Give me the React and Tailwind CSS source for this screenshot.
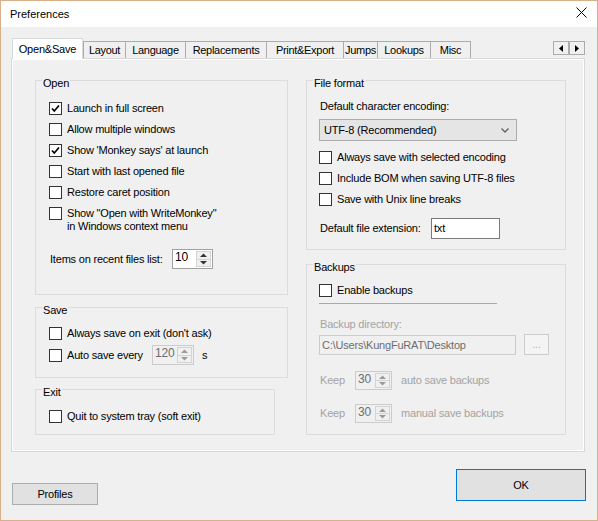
import React from 'react';

const Check = ({ checked }) => (
    <div className="w-[13px] h-[13px] shrink-0 border border-[#333333] bg-white flex items-center justify-center">
        {checked && (
            <svg width="11" height="11" viewBox="0 0 11 11">
                <path d="M2 5.5 L4.3 8 L9 2.5" fill="none" stroke="#000" strokeWidth="1.7" />
            </svg>
        )}
    </div>
);

const CheckRow = ({ label, checked, className = '' }) => (
    <div className={`flex items-center gap-[5px] h-[21px] ${className}`}>
        <Check checked={checked} />
        <span>{label}</span>
    </div>
);

const Tri = ({ dir, color = '#000' }) => {
    const pts = {
        up: '0,4 3.5,0.5 7,4',
        down: '0,0 3.5,3.5 7,0',
        left: '4,0 0,3.5 4,7',
        right: '0,0 4,3.5 0,7',
    }[dir];
    const vertical = dir === 'up' || dir === 'down';
    return (
        <svg width={vertical ? 7 : 4} height={vertical ? 4 : 7} viewBox={vertical ? '0 0 7 4' : '0 0 4 7'}>
            <polygon points={pts} fill={color} />
        </svg>
    );
};

const Spinner = ({ value, w, h = 20, disabled }) => (
    <div
        className={`flex shrink-0 border ${disabled ? 'border-[#cccccc] bg-[#f0f0f0] text-[#6d6d6d]' : 'border-[#a0a0a0] bg-white'}`}
        style={{ width: w, height: h }}
    >
        <div className="flex-1 pl-[2px] leading-[15px] text-[12px]">{value}</div>
        <div className="w-[15px] my-[1px] mr-[1px] flex flex-col border border-[#d4d4d4] bg-[#f0f0f0]">
            <div className="flex-1 flex items-center justify-center border-b border-[#d4d4d4]">
                <Tri dir="up" color={disabled ? '#9a9a9a' : '#333'} />
            </div>
            <div className="flex-1 flex items-center justify-center">
                <Tri dir="down" color={disabled ? '#9a9a9a' : '#333'} />
            </div>
        </div>
    </div>
);

const Group = ({ title, className = '', children }) => (
    <div className={`relative border border-[#dcdcdc] ${className}`}>
        <span className="absolute top-[-5px] left-[6px] px-[1px] leading-[14px] bg-[#f0f0f0]">{title}</span>
        {children}
    </div>
);

const tabs = [
    ['Layout', 42],
    ['Language', 60],
    ['Replacements', 81],
    ['Print&Export', 77],
    ['Jumps', 34],
    ['Lookups', 53],
    ['Misc', 41],
];

export default function App() {
    return (
        <div className="w-[598px] h-[521px] border border-[#d8b08a] bg-[#f0f0f0] flex flex-col text-[11px] tracking-[-0.2px] text-black font-['Liberation_Sans',Arial,sans-serif]">
            {/* title bar */}
            <div className="h-[26px] bg-white flex items-center justify-between pl-[9px] pr-[10px]">
                <span className="tracking-normal">Preferences</span>
                <svg width="11" height="11" viewBox="0 0 11 11" className="mb-[3px]">
                    <path d="M0.5 0.5 L10.5 10.5 M10.5 0.5 L0.5 10.5" stroke="#000" strokeWidth="1" />
                </svg>
            </div>

            <div className="ml-[10px] w-[574px] mt-[11px]">
                {/* tab strip */}
                <div className="flex items-start h-[20px]">
                    <div className="relative z-10 ml-[1px] w-[71px] h-[21px] bg-white border border-b-0 border-[#d9d9d9] flex items-center justify-center">
                        Open&amp;Save
                    </div>
                    {tabs.map(([t, w], i) => (
                        <div
                            key={t}
                            className={`mt-[3px] h-[17px] border-t border-l border-[#acacac] bg-[#f0f0f0] flex items-center justify-center whitespace-nowrap tracking-[-0.3px] ${i === tabs.length - 1 ? 'border-r' : ''}`}
                            style={{ width: w }}
                        >
                            {t}
                        </div>
                    ))}
                    <div className="ml-auto mt-[3px] flex">
                        <div className="w-[16px] h-[14px] border border-[#acacac] bg-[#f0f0f0] flex items-center justify-center">
                            <Tri dir="left" />
                        </div>
                        <div className="w-[16px] h-[14px] border border-[#acacac] bg-[#f0f0f0] flex items-center justify-center">
                            <Tri dir="right" />
                        </div>
                    </div>
                </div>

                {/* tab page */}
                <div className="h-[394px] border border-[#d9d9d9] shadow-[inset_1px_1px_0_#ffffff,inset_-1px_-1px_0_#ffffff] pl-[23px] pt-[21px] flex gap-[18px]">
                    <div className="w-[253px] flex flex-col">
                        <Group title="Open" className="h-[215px] pt-[17px] pl-[13px]">
                            <CheckRow label="Launch in full screen" checked />
                            <CheckRow label="Allow multiple windows" />
                            <CheckRow label="Show 'Monkey says' at launch" checked />
                            <CheckRow label="Start with last opened file" />
                            <CheckRow label="Restore caret position" />
                            <div className="flex items-start gap-[5px] pt-[4px]">
                                <Check />
                                <div className="leading-[13px]">
                                    <div>Show "Open with WriteMonkey"</div>
                                    <div>in Windows context menu</div>
                                </div>
                            </div>
                            <div className="flex items-center mt-[16px] pl-[1px]">
                                <span className="w-[122px]">Items on recent files list:</span>
                                <Spinner value="10" w={41} />
                            </div>
                        </Group>

                        <Group title="Save" className="mt-[12px] h-[71px] pt-[14px] pl-[13px]">
                            <CheckRow label="Always save on exit (don't ask)" className="h-[22px]" />
                            <div className="flex items-center h-[22px]">
                                <Check />
                                <span className="ml-[5px] w-[85px]">Auto save every</span>
                                <Spinner value="120" w={42} disabled />
                                <span className="ml-[8px]">s</span>
                            </div>
                        </Group>

                        <Group title="Exit" className="mt-[11px] w-[240px] h-[46px] pt-[16px] pl-[13px]">
                            <CheckRow label="Quit to system tray (soft exit)" />
                        </Group>
                    </div>

                    <div className="w-[260px] flex flex-col">
                        <Group title="File format" className="h-[170px] pt-[15px] pl-[12px]">
                            <div className="h-[21px] flex items-center pl-[1px]">Default character encoding:</div>
                            <div className="mt-[2px] w-[198px] h-[22px] border border-[#acacac] bg-[#e5e5e5] flex items-center justify-between pl-[4px] pr-[7px]">
                                <span>UTF-8 (Recommended)</span>
                                <svg width="8" height="5" viewBox="0 0 8 5">
                                    <path d="M0.5 0.5 L4 4 L7.5 0.5" fill="none" stroke="#606060" strokeWidth="1.3" />
                                </svg>
                            </div>
                            <div className="mt-[6px]">
                                <CheckRow label="Always save with selected encoding" />
                                <CheckRow label="Include BOM when saving UTF-8 files" />
                                <CheckRow label="Save with Unix line breaks" />
                            </div>
                            <div className="mt-[8px] h-[21px] flex items-center pl-[1px]">
                                <span className="w-[111px]">Default file extension:</span>
                                <div className="w-[69px] h-[21px] border border-[#7a7a7a] bg-white flex items-center pl-[2px]">txt</div>
                            </div>
                        </Group>

                        <Group title="Backups" className="mt-[14px] h-[171px] pt-[15px] pl-[12px]">
                            <CheckRow label="Enable backups" />
                            <div className="mt-[2px] w-[178px] h-px bg-[#a9a9a9]" />
                            <div className="mt-[12px] leading-[16px] pl-[1px] text-[#a3a3a3]">Backup directory:</div>
                            <div className="mt-[3px] flex items-start gap-[8px]">
                                <div className="w-[197px] h-[20px] border border-[#cccccc] bg-[#f0f0f0] flex items-center pl-[2px] text-[#6d6d6d]">
                                    C:\Users\KungFuRAT\Desktop
                                </div>
                                <div className="-mt-[1px] w-[25px] h-[21px] border border-[#cccccc] bg-[#f4f4f4] flex items-center justify-center text-[#b0b0b0]">
                                    ...
                                </div>
                            </div>
                            <div className="mt-[16px] flex items-center pl-[1px] text-[#a3a3a3]">
                                <span className="w-[35px]">Keep</span>
                                <Spinner value="30" w={37} h={19} disabled />
                                <span className="ml-[9px]">auto save backups</span>
                            </div>
                            <div className="mt-[14px] flex items-center pl-[1px] text-[#a3a3a3]">
                                <span className="w-[35px]">Keep</span>
                                <Spinner value="30" w={37} h={19} disabled />
                                <span className="ml-[9px]">manual save backups</span>
                            </div>
                        </Group>
                    </div>
                </div>
            </div>

            {/* bottom buttons */}
            <div className="flex justify-between items-start px-[11px]">
                <div className="mt-[31px] w-[86px] h-[22px] border border-[#adadad] bg-[#e1e1e1] flex items-center justify-center">
                    Profiles
                </div>
                <div className="mt-[17px] w-[130px] h-[32px] border border-[#0078d7] bg-[#e1e1e1] flex items-center justify-center">
                    OK
                </div>
            </div>
        </div>
    );
}
